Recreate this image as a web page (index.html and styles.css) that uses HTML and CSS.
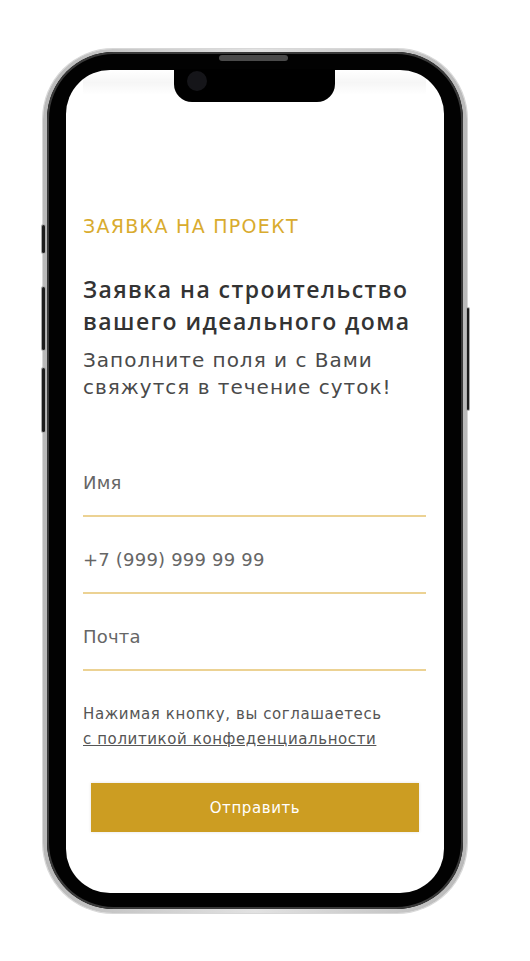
FILE: index.html
```html
<!DOCTYPE html>
<html lang="ru">
<head>
<meta charset="utf-8">
<title>Заявка на проект</title>
<link rel="stylesheet" href="styles.css">
</head>
<body>
<div class="phone">
  <span class="side-btn silent"></span>
  <span class="side-btn vol-up"></span>
  <span class="side-btn vol-down"></span>
  <span class="side-btn power"></span>
  <div class="bezel">
    <div class="speaker"></div>
    <div class="notch"><span class="camera"></span></div>
    <div class="screen">
      <div class="header-shadow"></div>
      <p class="eyebrow">ЗАЯВКА НА ПРОЕКТ</p>
      <h1 class="heading">Заявка на строительство вашего идеального дома</h1>
      <p class="lead">Заполните поля и с Вами свяжутся в течение суток!</p>
      <form class="form">
        <input class="field" type="text" placeholder="Имя">
        <input class="field" type="tel" placeholder="+7 (999) 999 99 99">
        <input class="field" type="email" placeholder="Почта">
        <p class="consent">Нажимая кнопку, вы соглашаетесь<br><a class="policy" href="#">с политикой конфеденциальности</a></p>
        <button class="submit" type="button">Отправить</button>
      </form>
    </div>
  </div>
</div>
</body>
</html>
```

FILE: styles.css
```css
* { box-sizing: border-box; }
html, body { margin: 0; background: #fff; }
body {
  width: 530px;
  height: 961px;
  padding: 49px 0 0 43px;
  font-family: "DejaVu Sans", "Open Sans", sans-serif;
}
.phone {
  position: relative;
  width: 424px;
  height: 864px;
  border-radius: 70px;
  background: linear-gradient(90deg, #b9b9b9, #e2e2e2 50%, #b9b9b9);
  padding: 3px 4px 4px 4px;
  box-shadow: 0 0 0 1px #d8d8d8;
}
.bezel {
  position: relative;
  height: 100%;
  border-radius: 67px;
  background: #020202;
  box-shadow: inset 0 0 0 2px #3a3a3a;
  padding: 18px 19px 16px 19px;
}
.speaker {
  position: absolute;
  left: 172px;
  top: 3px;
  width: 69px;
  height: 6px;
  border-radius: 3px;
  background: #4a4a4a;
}
.notch {
  position: absolute;
  left: 127px;
  top: 17px;
  width: 161px;
  height: 33px;
  background: #000;
  border-radius: 0 0 18px 18px;
  z-index: 2;
}
.camera {
  position: absolute;
  left: 13px;
  top: 2px;
  width: 20px;
  height: 20px;
  border-radius: 50%;
  background: #151519;
}
.side-btn {
  position: absolute;
  width: 3px;
  background: #1c1c1c;
  border-radius: 2px;
  box-shadow: 0 0 0 1px #aaa;
}
.silent { left: -1px; top: 176px; height: 28px; }
.vol-up { left: -1px; top: 238px; height: 63px; }
.vol-down { left: -1px; top: 319px; height: 64px; }
.power { right: -2px; top: 259px; height: 102px; width: 2px; }
.screen {
  position: relative;
  height: 100%;
  background: #fff;
  border-radius: 44px;
  overflow: hidden;
  padding: 144px 18px 0 17px;
}
.header-shadow {
  position: absolute;
  left: 17px;
  right: 18px;
  top: 0;
  height: 25px;
  background: linear-gradient(180deg, rgba(0,0,0,0) 0%, rgba(0,0,0,0.035) 50%, rgba(0,0,0,0) 100%);
}
.eyebrow {
  margin: 0;
  font-size: 19px;
  line-height: 24px;
  color: #d9ab2e;
  letter-spacing: 1.3px;
}
.heading {
  margin: 35px 0 0;
  font-family: "Open Sans", sans-serif;
  font-size: 23px;
  line-height: 32px;
  font-weight: 600;
  letter-spacing: 1.45px;
  color: #333;
}
.lead {
  margin: 10px 0 0;
  font-size: 20px;
  line-height: 27px;
  letter-spacing: 1px;
  color: #4a4a4a;
}
.form {
  display: flex;
  flex-direction: column;
  margin-top: 39px;
}
.field {
  display: block;
  width: 100%;
  border: 0;
  border-bottom: 2px solid #ecd293;
  outline: none;
  background: transparent;
  padding: 31px 0 22px;
  height: 77px;
  font-family: inherit;
  font-size: 18px;
  line-height: 22px;
  letter-spacing: 0.2px;
  color: #555;
}
.field::placeholder { color: #666; opacity: 1; }
.consent {
  margin: 31px 0 0;
  font-size: 15px;
  line-height: 25px;
  letter-spacing: 0.6px;
  color: #555;
}
.policy {
  color: #555;
  text-decoration: underline;
}
.submit {
  margin: 31px 7px 0 8px;
  height: 49px;
  border: 0;
  background: #cc9d22;
  color: #fff;
  font-family: inherit;
  font-size: 15px;
  letter-spacing: 0.6px;
  box-shadow: 0 0 3px rgba(0,0,0,0.12);
}
```
